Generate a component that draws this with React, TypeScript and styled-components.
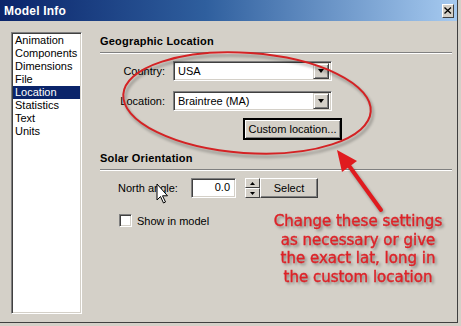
import styled, { createGlobalStyle } from 'styled-components'

const GlobalStyle = createGlobalStyle`
  html, body {
    margin: 0;
    padding: 0;
    background: #d4d0c8;
  }
  body {
    font-family: 'Liberation Sans', Arial, sans-serif;
    font-size: 11px;
    color: #000;
  }
`

const categories = ['Animation', 'Components', 'Dimensions', 'File', 'Location', 'Statistics', 'Text', 'Units']

const note = ['Change these settings', 'as necessary or give', 'the exact lat, long in', 'the custom location']

export default function App() {
  return (
    <>
      <GlobalStyle />
      <Window>
        <TitleBar>
          <Title>Model Info</Title>
          <CloseButton aria-label="Close">
            <svg width="8" height="7" viewBox="0 0 8 7">
              <path d="M0.5 0.5 L7 6.5 M7 0.5 L0.5 6.5" stroke="#000" strokeWidth="1.3" />
            </svg>
          </CloseButton>
        </TitleBar>
        <Body>
          <ListBox>
            {categories.map((c) => (
              <ListItem key={c} $selected={c === 'Location'}>
                {c}
              </ListItem>
            ))}
          </ListBox>
          <Panel>
            <SectionTitle>Geographic Location</SectionTitle>
            <Separator />
            <FieldGrid>
              <Label>Country:</Label>
              <Combo>
                <ComboText>USA</ComboText>
                <DropButton>
                  <DownTriangle />
                </DropButton>
              </Combo>
              <Label>Location:</Label>
              <Combo>
                <ComboText>Braintree (MA)</ComboText>
                <DropButton>
                  <DownTriangle />
                </DropButton>
              </Combo>
            </FieldGrid>
            <ButtonRow>
              <DefaultButton>Custom location...</DefaultButton>
            </ButtonRow>
            <SectionTitle $gap={12}>Solar Orientation</SectionTitle>
            <Separator />
            <AngleRow>
              <AngleLabel>North angle:</AngleLabel>
              <NumberField>0.0</NumberField>
              <Spinner>
                <SpinButton>
                  <svg width="5" height="3" viewBox="0 0 5 3">
                    <path d="M2.5 0 L5 3 L0 3 Z" fill="#000" />
                  </svg>
                </SpinButton>
                <SpinButton>
                  <svg width="5" height="3" viewBox="0 0 5 3">
                    <path d="M0 0 L5 0 L2.5 3 Z" fill="#000" />
                  </svg>
                </SpinButton>
              </Spinner>
              <PushButton>Select</PushButton>
            </AngleRow>
            <CheckRow>
              <CheckBox />
              <span>Show in model</span>
            </CheckRow>
          </Panel>
        </Body>

        <Overlay width="461" height="326" viewBox="0 0 461 326">
          <defs>
            <filter id="soft" x="-10%" y="-10%" width="120%" height="120%">
              <feGaussianBlur stdDeviation="1.6" />
            </filter>
          </defs>
          <g opacity="0.35" filter="url(#soft)" transform="translate(2 3)">
            <ellipse cx="247" cy="103" rx="124" ry="50" transform="rotate(4 247 103)" fill="none" stroke="#000" strokeWidth="2" />
            <path d="M381 210 L347 163" stroke="#000" strokeWidth="4" />
          </g>
          <ellipse cx="247" cy="103" rx="124" ry="50" transform="rotate(4 247 103)" fill="none" stroke="#d42224" strokeWidth="2" />
          <path d="M381 210 L347 163" stroke="#e01b1f" strokeWidth="4" strokeLinecap="round" />
          <path d="M337 150 L357 161 L342 172 Z" fill="#e01b1f" />
          <path
            d="M157 184 L157 200 L160.5 196.5 L163.5 203 L165.5 202 L162.5 195.8 L167.5 195.8 Z"
            fill="#fff"
            stroke="#000"
            strokeWidth="1"
            strokeLinejoin="miter"
          />
        </Overlay>

        <Annotation>
          {note.map((line) => (
            <div key={line}>{line}</div>
          ))}
        </Annotation>
      </Window>
    </>
  )
}

const Window = styled.div`
  position: relative;
  display: flex;
  flex-direction: column;
  width: 457px;
  height: 322px;
  background: #d4d0c8;
  border-right: 1px solid #404040;
  border-bottom: 1px solid #404040;
  overflow: hidden;
`

const TitleBar = styled.div`
  display: flex;
  align-items: center;
  justify-content: space-between;
  height: 21px;
  padding: 0 3px 0 4px;
  background: linear-gradient(to right, #0a246a 0%, #2f5f9e 45%, #a6caf0 100%);
`

const Title = styled.span`
  font-weight: bold;
  font-size: 12px;
  color: #fff;
  letter-spacing: 0.2px;
`

const CloseButton = styled.div`
  display: flex;
  align-items: center;
  justify-content: center;
  width: 12px;
  height: 14px;
  box-sizing: border-box;
  background: #d4d0c8;
  border-top: 1px solid #fff;
  border-left: 1px solid #fff;
  border-right: 1px solid #404040;
  border-bottom: 1px solid #404040;
`

const Body = styled.div`
  display: flex;
  flex: 1;
  padding: 11px 0 0 11px;
`

const ListBox = styled.div`
  width: 71px;
  height: 282px;
  box-sizing: border-box;
  background: #fff;
  border-top: 1px solid #808080;
  border-left: 1px solid #808080;
  border-right: 1px solid #fff;
  border-bottom: 1px solid #fff;
  box-shadow: inset 1px 1px 0 #404040, inset -1px -1px 0 #d4d0c8;
  padding: 1px 1px 0 1px;
`

const ListItem = styled.div<{ $selected?: boolean }>`
  height: 13px;
  line-height: 13px;
  padding-left: 2px;
  white-space: nowrap;
  color: ${(p) => (p.$selected ? '#fff' : '#000')};
  background: ${(p) => (p.$selected ? '#0a246a' : 'transparent')};
`

const Panel = styled.div`
  display: flex;
  flex-direction: column;
  margin-left: 18px;
  width: 352px;
`

const SectionTitle = styled.div<{ $gap?: number }>`
  margin-top: ${(p) => (p.$gap ?? 2)}px;
  font-weight: bold;
  font-size: 11px;
  line-height: 14px;
  letter-spacing: 0.2px;
`

const Separator = styled.div`
  height: 0;
  margin-top: 4px;
  border-top: 1px solid #808080;
  border-bottom: 1px solid #fff;
`

const FieldGrid = styled.div`
  display: grid;
  grid-template-columns: 65px 159px;
  column-gap: 8px;
  row-gap: 10px;
  align-items: center;
  margin-top: 7px;
`

const Label = styled.span`
  text-align: right;
`

const Combo = styled.div`
  display: flex;
  align-items: center;
  height: 20px;
  box-sizing: border-box;
  background: #fff;
  border-top: 1px solid #808080;
  border-left: 1px solid #808080;
  border-right: 1px solid #fff;
  border-bottom: 1px solid #fff;
  box-shadow: inset 1px 1px 0 #404040, inset -1px -1px 0 #d4d0c8;
  padding: 2px;
`

const ComboText = styled.span`
  flex: 1;
  padding-left: 2px;
`

const DropButton = styled.div`
  display: flex;
  align-items: center;
  justify-content: center;
  width: 16px;
  height: 16px;
  box-sizing: border-box;
  background: #d4d0c8;
  border-top: 1px solid #d4d0c8;
  border-left: 1px solid #d4d0c8;
  border-right: 1px solid #404040;
  border-bottom: 1px solid #404040;
  box-shadow: inset 1px 1px 0 #fff, inset -1px -1px 0 #808080;
`

const DownTriangle = styled.span`
  width: 0;
  height: 0;
  border-left: 3.5px solid transparent;
  border-right: 3.5px solid transparent;
  border-top: 4px solid #000;
`

const ButtonRow = styled.div`
  display: flex;
  padding-left: 144px;
  margin-top: 8px;
`

const PushButton = styled.div`
  display: flex;
  align-items: center;
  justify-content: center;
  height: 20px;
  padding: 0 6px;
  min-width: 58px;
  box-sizing: border-box;
  background: #d4d0c8;
  border-top: 1px solid #fff;
  border-left: 1px solid #fff;
  border-right: 1px solid #404040;
  border-bottom: 1px solid #404040;
  box-shadow: inset -1px -1px 0 #808080;
  white-space: nowrap;
`

const DefaultButton = styled(PushButton)`
  width: 97px;
  outline: 1px solid #000;
  outline-offset: 0;
  border: 1px solid #000;
  box-shadow: inset 1px 1px 0 #fff, inset -1px -1px 0 #808080;
`

const AngleRow = styled.div`
  display: flex;
  align-items: center;
  margin-top: 7px;
  padding-left: 18px;
`

const AngleLabel = styled.span`
  width: 73px;
`

const NumberField = styled.div`
  width: 45px;
  height: 20px;
  line-height: 16px;
  box-sizing: border-box;
  text-align: right;
  padding-right: 5px;
  background: #fff;
  border-top: 1px solid #808080;
  border-left: 1px solid #808080;
  border-right: 1px solid #fff;
  border-bottom: 1px solid #fff;
  box-shadow: inset 1px 1px 0 #404040, inset -1px -1px 0 #d4d0c8;
`

const Spinner = styled.div`
  display: flex;
  flex-direction: column;
  margin-left: 9px;
  width: 15px;
  height: 20px;
`

const SpinButton = styled.div`
  display: flex;
  align-items: center;
  justify-content: center;
  flex: 1;
  box-sizing: border-box;
  background: #d4d0c8;
  border-top: 1px solid #fff;
  border-left: 1px solid #fff;
  border-right: 1px solid #404040;
  border-bottom: 1px solid #404040;
`

const CheckRow = styled(AngleRow)`
  margin-top: 16px;
  padding-left: 19px;
  gap: 5px;
`

const CheckBox = styled.div`
  width: 13px;
  height: 13px;
  box-sizing: border-box;
  background: #fff;
  border-top: 1px solid #808080;
  border-left: 1px solid #808080;
  border-right: 1px solid #fff;
  border-bottom: 1px solid #fff;
  box-shadow: inset 1px 1px 0 #404040, inset -1px -1px 0 #d4d0c8;
`

const Overlay = styled.svg`
  position: absolute;
  left: 0;
  top: 0;
  pointer-events: none;
`

const Annotation = styled.div`
  position: absolute;
  left: 268px;
  top: 212px;
  width: 180px;
  text-align: center;
  font-family: 'DejaVu Sans', Verdana, sans-serif;
  font-size: 15px;
  line-height: 18.5px;
  color: #dd2228;
  -webkit-text-stroke: 0.4px #dd2228;
  text-shadow: 2px 2px 3px rgba(0, 0, 0, 0.45);
  white-space: nowrap;
`
